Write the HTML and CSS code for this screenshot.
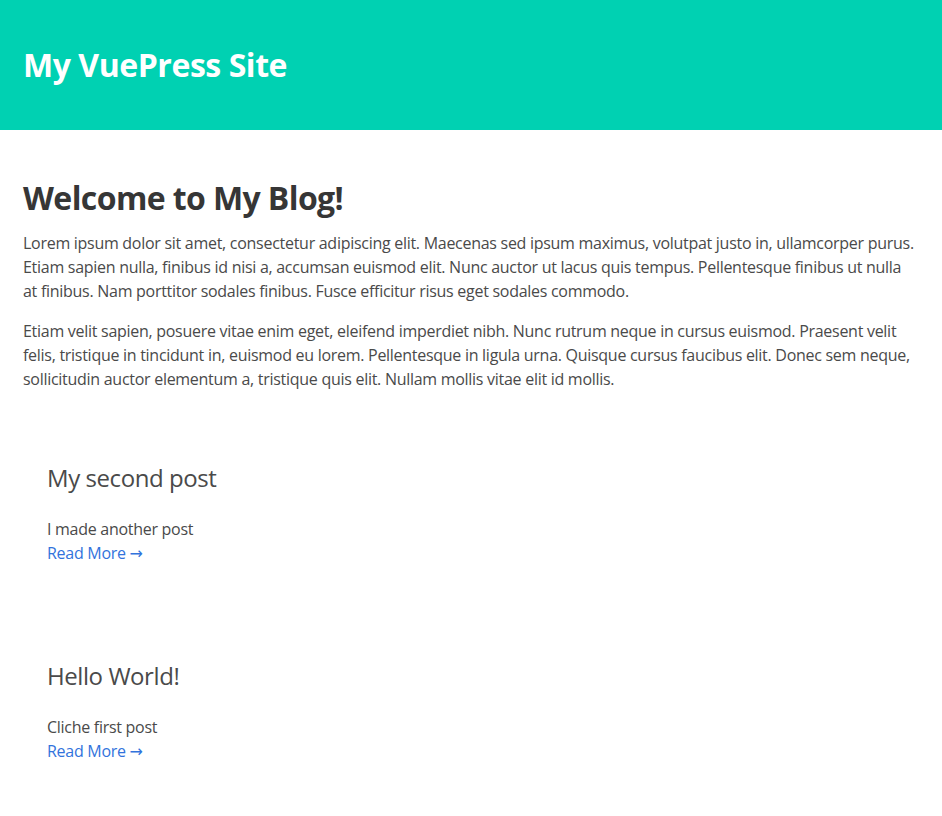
FILE: index.html
```html
<!DOCTYPE html>
<html lang="en">
<head>
<meta charset="utf-8">
<title>My VuePress Site</title>
<link rel="stylesheet" href="styles.css">
</head>
<body>
<header class="site-header">
  <div class="site-title">My VuePress Site</div>
</header>
<main class="content">
  <h1 class="page-title">Welcome to My Blog!</h1>
  <p class="intro">Lorem ipsum dolor sit amet, consectetur adipiscing elit. Maecenas sed ipsum maximus, volutpat justo in, ullamcorper purus. Etiam sapien nulla, finibus id nisi a, accumsan euismod elit. Nunc auctor ut lacus quis tempus. Pellentesque finibus ut nulla at finibus. Nam porttitor sodales finibus. Fusce efficitur risus eget sodales commodo.</p>
  <p class="intro">Etiam velit sapien, posuere vitae enim eget, eleifend imperdiet nibh. Nunc rutrum neque in cursus euismod. Praesent velit felis, tristique in tincidunt in, euismod eu lorem. Pellentesque in ligula urna. Quisque cursus faucibus elit. Donec sem neque, sollicitudin auctor elementum a, tristique quis elit. Nullam mollis vitae elit id mollis.</p>
  <section class="posts">
    <article class="post">
      <h2 class="post-title">My second post</h2>
      <p class="post-desc">I made another post</p>
      <a class="read-more" href="#">Read More →</a>
    </article>
    <article class="post">
      <h2 class="post-title">Hello World!</h2>
      <p class="post-desc">Cliche first post</p>
      <a class="read-more" href="#">Read More →</a>
    </article>
  </section>
</main>
</body>
</html>
```
FILE: styles.css
```css
* { box-sizing: border-box; }
html, body {
  margin: 0;
  padding: 0;
  background: #fff;
}
body {
  font-family: "Open Sans", "Noto Sans", "DejaVu Sans", sans-serif;
  color: #4a4a4a;
  font-size: 16px;
  line-height: 24px;
  letter-spacing: -0.28px;
}
.site-header {
  background: #00d1b2;
  height: 130px;
  display: flex;
  align-items: center;
  padding: 0 23px;
}
.site-title {
  color: #fff;
  font-size: 32px;
  font-weight: 700;
  line-height: 40px;
  letter-spacing: -0.45px;
}
.content {
  padding: 0 23px 40px;
}
.page-title {
  margin: 48px 0 13px;
  font-size: 32px;
  font-weight: 700;
  line-height: 40px;
  letter-spacing: -0.6px;
  color: #363636;
}
.intro {
  margin: 0 0 16px;
}
.posts {
  display: flex;
  flex-direction: column;
  gap: 45px;
  margin-top: 45px;
}
.post {
  padding: 24px;
}
.post-title {
  margin: 0 0 21px;
  font-size: 24px;
  font-weight: 400;
  line-height: 36px;
  letter-spacing: -0.43px;
  color: #4a4a4a;
}
.post-desc {
  margin: 0;
}
.read-more {
  color: #3273dc;
  text-decoration: none;
}
```
